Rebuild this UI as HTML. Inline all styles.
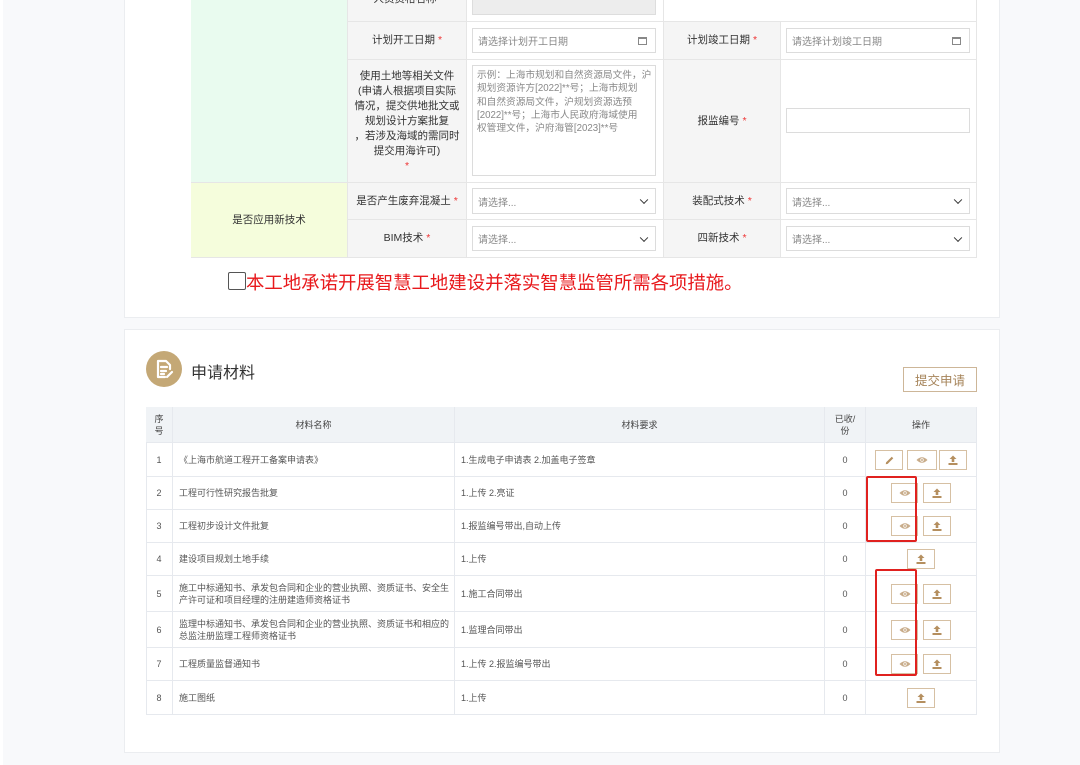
<!DOCTYPE html>
<html><head><meta charset="utf-8">
<style>
*{box-sizing:border-box;margin:0;padding:0}
body{width:1080px;height:765px;overflow:hidden;background:#f8f9fb;font-family:"Liberation Sans","Noto Sans CJK SC",sans-serif;color:#555;position:relative}
.a{position:absolute}
.card{position:absolute;background:#fff;border:1px solid #ebedf0}
.cell{position:absolute;border-right:1px solid #e6e6e6;border-bottom:1px solid #e6e6e6;display:flex;align-items:center;justify-content:center;font-size:10.5px;text-align:center;line-height:15px}
.lab{background:#f5f5f5;color:#333}
.star{color:#e33;margin-left:3px}
.inp{position:absolute;border:1px solid #dcdcdc;background:#fff;font-size:10px;color:#888;display:flex;align-items:center;padding-left:5px}
.chev{position:absolute;right:8px;top:50%;width:6px;height:6px;border-right:1.5px solid #333;border-bottom:1.5px solid #333;transform:translateY(-70%) rotate(45deg)}
.cal{position:absolute;right:8px;top:50%;transform:translateY(-50%);width:9px;height:8px;border:1px solid #888;border-top-width:2px}
.t{position:absolute;font-size:9px;color:#555;border-right:1px solid #e6e9ee;border-bottom:1px solid #e6e9ee;display:flex;align-items:center;line-height:12px}
.c{justify-content:center;text-align:center}
.p{padding-left:6px}
.hd{background:#f0f3f6;color:#444}
.btn{position:absolute;border:1px solid #d6c0a3;background:#fff;width:28px;height:20px;display:flex;align-items:center;justify-content:center}
.red{position:absolute;border:2px solid #e0211f;border-radius:2px}
</style></head><body>
<div class="a" style="left:0;top:0;width:3px;height:765px;background:#fff"></div>
<div class="card" style="left:124px;top:-5px;width:876px;height:323px"></div>
<div class="a" style="left:191px;top:0;width:786px;height:258px;border-left:1px solid #e6e6e6;"></div>
<div class="cell" style="left:191px;top:-2px;width:157px;height:185px;background:#e9fbef"></div>
<div class="cell" style="left:191px;top:183px;width:157px;height:75px;background:#f5fddc;color:#333">是否应用新技术</div>
<div class="cell lab" style="left:348px;top:-2px;width:119px;height:24px;align-items:flex-start"><span style="margin-top:-6px">人员资格名称<span style="color:#e33">*</span></span></div>
<div class="cell" style="left:467px;top:-2px;width:197px;height:24px"></div>
<div class="a" style="left:472px;top:0;width:184px;height:15px;background:#ededed;border:1px solid #ddd;border-top:0"></div>
<div class="cell" style="left:664px;top:-2px;width:313px;height:24px"></div>

<div class="cell lab" style="left:348px;top:22px;width:119px;height:38px">计划开工日期<span class="star">*</span></div>
<div class="cell" style="left:467px;top:22px;width:197px;height:38px"></div>
<div class="inp" style="left:472px;top:28px;width:184px;height:25px">请选择计划开工日期<span class="cal"></span></div>
<div class="cell lab" style="left:664px;top:22px;width:117px;height:38px">计划竣工日期<span class="star">*</span></div>
<div class="cell" style="left:781px;top:22px;width:196px;height:38px"></div>
<div class="inp" style="left:786px;top:28px;width:184px;height:25px">请选择计划竣工日期<span class="cal"></span></div>

<div class="cell lab" style="left:348px;top:60px;width:119px;height:123px;flex-direction:column">使用土地等相关文件<br>(申请人根据项目实际<br>情况，提交供地批文或<br>规划设计方案批复<br>，若涉及海域的需同时<br>提交用海许可)<br><span style="color:#e33">*</span></div>
<div class="cell" style="left:467px;top:60px;width:197px;height:123px"></div>
<div class="inp" style="left:472px;top:65px;width:184px;height:111px;align-items:flex-start;padding:3px 4px;line-height:13.3px;text-align:left;font-size:9.7px;white-space:nowrap;overflow:hidden">示例：上海市规划和自然资源局文件，沪<br>规划资源许方[2022]**号；上海市规划<br>和自然资源局文件，沪规划资源选预<br>[2022]**号；上海市人民政府海域使用<br>权管理文件，沪府海管[2023]**号</div>
<div class="cell lab" style="left:664px;top:60px;width:117px;height:123px">报监编号<span class="star">*</span></div>
<div class="cell" style="left:781px;top:60px;width:196px;height:123px"></div>
<div class="inp" style="left:786px;top:108px;width:184px;height:25px"></div>

<div class="cell lab" style="left:348px;top:183px;width:119px;height:37px">是否产生废弃混凝土<span class="star">*</span></div>
<div class="cell" style="left:467px;top:183px;width:197px;height:37px"></div>
<div class="inp" style="left:472px;top:188px;width:184px;height:26px">请选择...<span class="chev"></span></div>
<div class="cell lab" style="left:664px;top:183px;width:117px;height:37px">装配式技术<span class="star">*</span></div>
<div class="cell" style="left:781px;top:183px;width:196px;height:37px"></div>
<div class="inp" style="left:786px;top:188px;width:184px;height:26px">请选择...<span class="chev"></span></div>

<div class="cell lab" style="left:348px;top:220px;width:119px;height:38px">BIM技术<span class="star">*</span></div>
<div class="cell" style="left:467px;top:220px;width:197px;height:38px"></div>
<div class="inp" style="left:472px;top:226px;width:184px;height:25px">请选择...<span class="chev"></span></div>
<div class="cell lab" style="left:664px;top:220px;width:117px;height:38px">四新技术<span class="star">*</span></div>
<div class="cell" style="left:781px;top:220px;width:196px;height:38px"></div>
<div class="inp" style="left:786px;top:226px;width:184px;height:25px">请选择...<span class="chev"></span></div>

<div class="a" style="left:228px;top:272px;width:18px;height:18px;border:1.5px solid #555;border-radius:2px;background:#fff"></div>
<div class="a" style="left:246px;top:271px;font-size:18.4px;line-height:24px;color:#e8191c;white-space:nowrap">本工地承诺开展智慧工地建设并落实智慧监管所需各项措施。</div>

<div class="card" style="left:124px;top:329px;width:876px;height:424px"></div>
<div class="a" style="left:146px;top:351px;width:36px;height:36px;border-radius:50%;background:#c4a876"></div>
<svg class="a" style="left:146px;top:351px" width="36" height="36" viewBox="0 0 36 36"><path d="M12 10h8l4 4v4M12 10v16h7M15 16h6M15 20h5M15 23h3" fill="none" stroke="#fff" stroke-width="2.2" stroke-linecap="round" stroke-linejoin="round"/><path d="M21 26l5-5" stroke="#fff" stroke-width="2.2" stroke-linecap="round"/></svg>
<div class="a" style="left:191px;top:359px;font-size:16px;color:#333">申请材料</div>
<div class="a" style="left:903px;top:367px;width:74px;height:25px;border:1px solid #cdb698;color:#a6845a;font-size:12.5px;display:flex;align-items:center;justify-content:center">提交申请</div>

<svg width="0" height="0" style="position:absolute"><defs>
<symbol id="eye" viewBox="0 0 12 8"><path d="M0.5 4Q6 -1.5 11.5 4Q6 9.5 0.5 4Z" fill="#c8ac8a"/><circle cx="6" cy="4" r="1.7" fill="#fff"/><circle cx="6" cy="4" r="1" fill="#c8ac8a"/></symbol>
<symbol id="up" viewBox="0 0 10 10"><path d="M5 0.5L1.5 4h2.2v3h2.6V4h2.2z M0.5 8h9v2h-9z" fill="#b58f5f"/></symbol>
<symbol id="pen" viewBox="0 0 10 10"><path d="M7.5 0.8l1.7 1.7L3 8.7 0.8 9.2l0.5-2.2z" fill="#b58f5f"/></symbol>
</defs></svg>

<div class="a" style="left:146px;top:407px;width:831px;height:308px;border-left:1px solid #e6e9ee;border-top:1px solid #e6e9ee"></div>
<div class="t c hd" style="left:146px;top:407px;width:27px;height:36px">序<br>号</div>
<div class="t c hd" style="left:173px;top:407px;width:282px;height:36px">材料名称</div>
<div class="t c hd" style="left:455px;top:407px;width:370px;height:36px">材料要求</div>
<div class="t c hd" style="left:825px;top:407px;width:41px;height:36px">已收/<br>份</div>
<div class="t c hd" style="left:866px;top:407px;width:111px;height:36px">操作</div>

<div class="t c" style="left:146px;top:443px;width:27px;height:34px">1</div>
<div class="t p" style="left:173px;top:443px;width:282px;height:34px">《上海市航道工程开工备案申请表》</div>
<div class="t p" style="left:455px;top:443px;width:370px;height:34px">1.生成电子申请表 2.加盖电子签章</div>
<div class="t c" style="left:825px;top:443px;width:41px;height:34px">0</div>
<div class="t" style="left:866px;top:443px;width:111px;height:34px"></div>

<div class="t c" style="left:146px;top:477px;width:27px;height:33px">2</div>
<div class="t p" style="left:173px;top:477px;width:282px;height:33px">工程可行性研究报告批复</div>
<div class="t p" style="left:455px;top:477px;width:370px;height:33px">1.上传 2.亮证</div>
<div class="t c" style="left:825px;top:477px;width:41px;height:33px">0</div>
<div class="t" style="left:866px;top:477px;width:111px;height:33px"></div>

<div class="t c" style="left:146px;top:510px;width:27px;height:33px">3</div>
<div class="t p" style="left:173px;top:510px;width:282px;height:33px">工程初步设计文件批复</div>
<div class="t p" style="left:455px;top:510px;width:370px;height:33px">1.报监编号带出,自动上传</div>
<div class="t c" style="left:825px;top:510px;width:41px;height:33px">0</div>
<div class="t" style="left:866px;top:510px;width:111px;height:33px"></div>

<div class="t c" style="left:146px;top:543px;width:27px;height:33px">4</div>
<div class="t p" style="left:173px;top:543px;width:282px;height:33px">建设项目规划土地手续</div>
<div class="t p" style="left:455px;top:543px;width:370px;height:33px">1.上传</div>
<div class="t c" style="left:825px;top:543px;width:41px;height:33px">0</div>
<div class="t" style="left:866px;top:543px;width:111px;height:33px"></div>

<div class="t c" style="left:146px;top:576px;width:27px;height:36px">5</div>
<div class="t p" style="left:173px;top:576px;width:282px;height:36px">施工中标通知书、承发包合同和企业的营业执照、资质证书、安全生产许可证和项目经理的注册建造师资格证书</div>
<div class="t p" style="left:455px;top:576px;width:370px;height:36px">1.施工合同带出</div>
<div class="t c" style="left:825px;top:576px;width:41px;height:36px">0</div>
<div class="t" style="left:866px;top:576px;width:111px;height:36px"></div>

<div class="t c" style="left:146px;top:612px;width:27px;height:36px">6</div>
<div class="t p" style="left:173px;top:612px;width:282px;height:36px">监理中标通知书、承发包合同和企业的营业执照、资质证书和相应的总监注册监理工程师资格证书</div>
<div class="t p" style="left:455px;top:612px;width:370px;height:36px">1.监理合同带出</div>
<div class="t c" style="left:825px;top:612px;width:41px;height:36px">0</div>
<div class="t" style="left:866px;top:612px;width:111px;height:36px"></div>

<div class="t c" style="left:146px;top:648px;width:27px;height:33px">7</div>
<div class="t p" style="left:173px;top:648px;width:282px;height:33px">工程质量监督通知书</div>
<div class="t p" style="left:455px;top:648px;width:370px;height:33px">1.上传 2.报监编号带出</div>
<div class="t c" style="left:825px;top:648px;width:41px;height:33px">0</div>
<div class="t" style="left:866px;top:648px;width:111px;height:33px"></div>

<div class="t c" style="left:146px;top:681px;width:27px;height:34px">8</div>
<div class="t p" style="left:173px;top:681px;width:282px;height:34px">施工图纸</div>
<div class="t p" style="left:455px;top:681px;width:370px;height:34px">1.上传</div>
<div class="t c" style="left:825px;top:681px;width:41px;height:34px">0</div>
<div class="t" style="left:866px;top:681px;width:111px;height:34px"></div>

<div class="btn" style="left:875px;top:450px"><svg width="9" height="9"><use href="#pen"/></svg></div>
<div class="btn" style="left:907px;top:450px;width:30px"><svg width="12" height="8"><use href="#eye"/></svg></div>
<div class="btn" style="left:939px;top:450px"><svg width="10" height="10"><use href="#up"/></svg></div>

<div class="btn" style="left:891px;top:483px;width:27px"><svg width="12" height="8"><use href="#eye"/></svg></div>
<div class="btn" style="left:923px;top:483px"><svg width="10" height="10"><use href="#up"/></svg></div>
<div class="btn" style="left:891px;top:516px;width:27px"><svg width="12" height="8"><use href="#eye"/></svg></div>
<div class="btn" style="left:923px;top:516px"><svg width="10" height="10"><use href="#up"/></svg></div>
<div class="btn" style="left:907px;top:549px"><svg width="10" height="10"><use href="#up"/></svg></div>
<div class="btn" style="left:891px;top:584px;width:27px"><svg width="12" height="8"><use href="#eye"/></svg></div>
<div class="btn" style="left:923px;top:584px"><svg width="10" height="10"><use href="#up"/></svg></div>
<div class="btn" style="left:891px;top:620px;width:27px"><svg width="12" height="8"><use href="#eye"/></svg></div>
<div class="btn" style="left:923px;top:620px"><svg width="10" height="10"><use href="#up"/></svg></div>
<div class="btn" style="left:891px;top:654px;width:27px"><svg width="12" height="8"><use href="#eye"/></svg></div>
<div class="btn" style="left:923px;top:654px"><svg width="10" height="10"><use href="#up"/></svg></div>
<div class="btn" style="left:907px;top:688px"><svg width="10" height="10"><use href="#up"/></svg></div>

<div class="red" style="left:866px;top:476px;width:51px;height:66px"></div>
<div class="red" style="left:875px;top:569px;width:42px;height:107px"></div>
</body></html>
